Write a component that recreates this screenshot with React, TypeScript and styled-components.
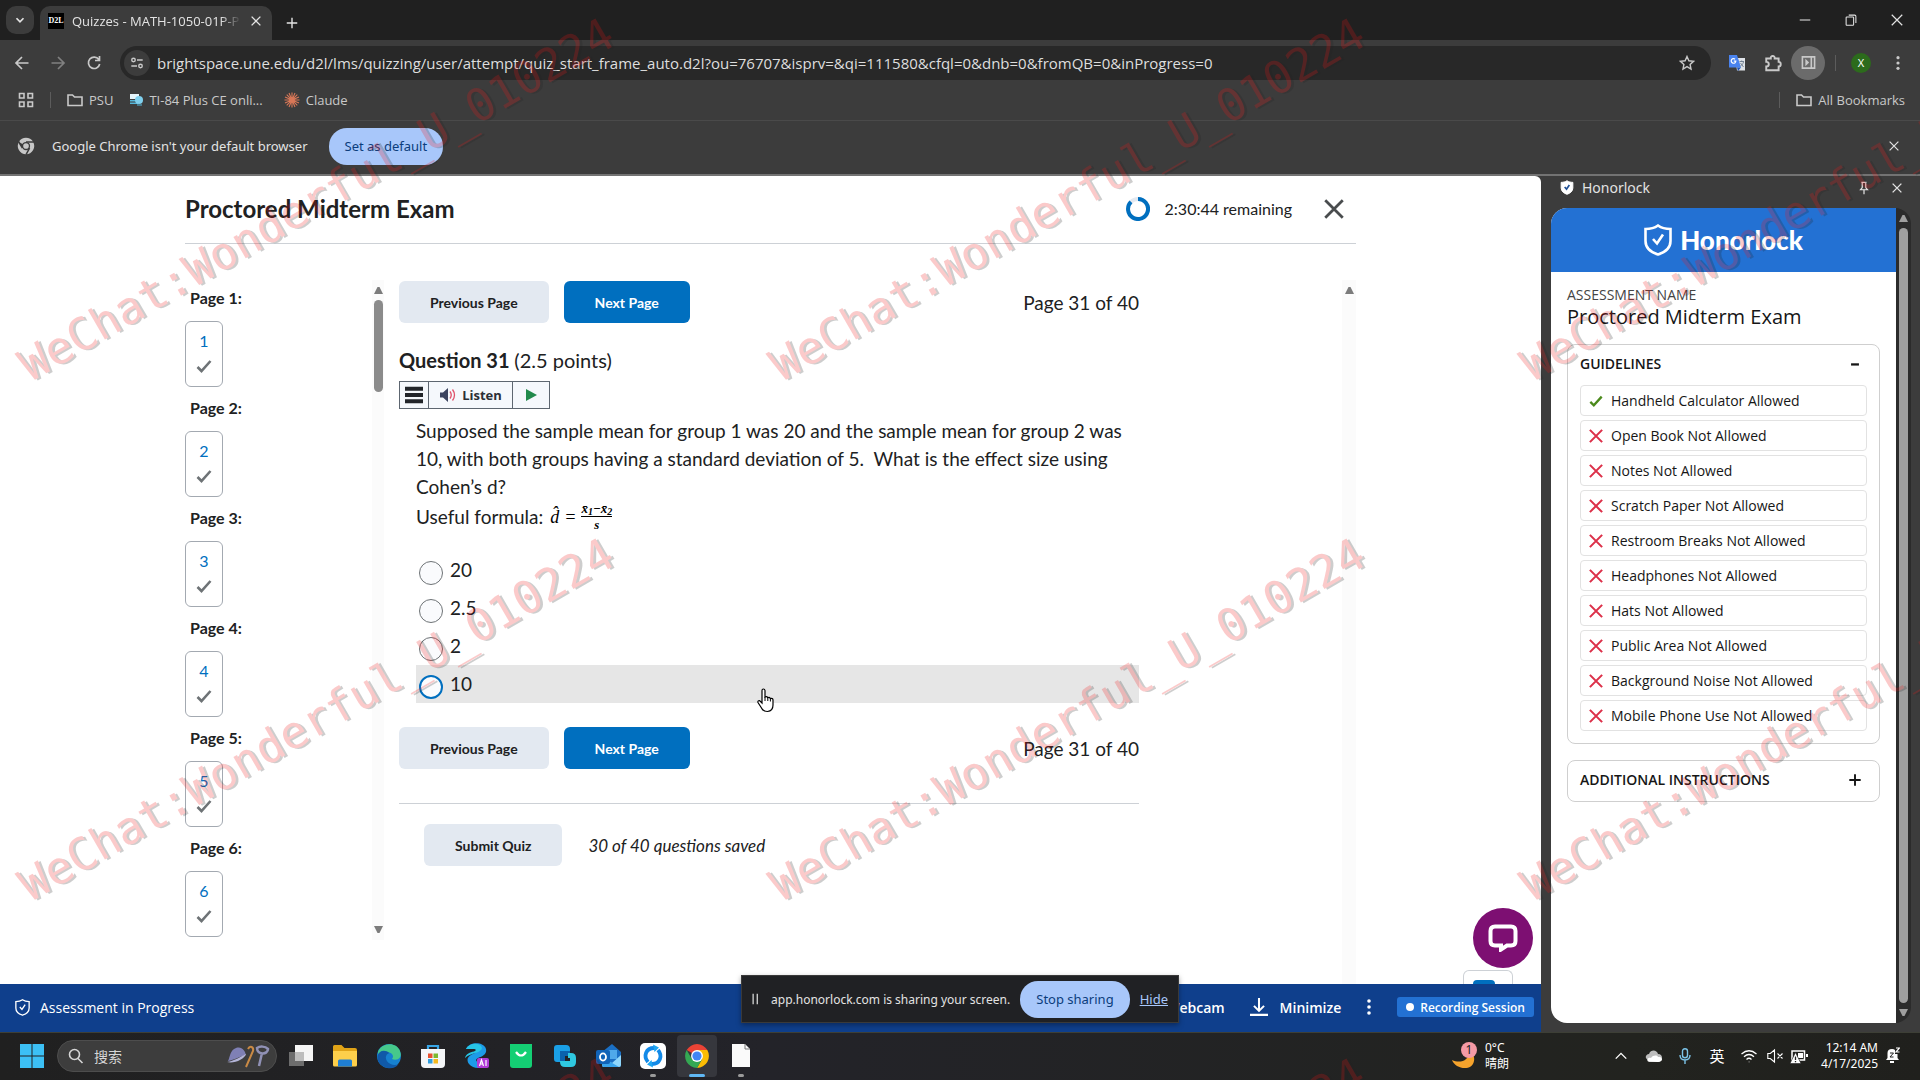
import React from "react";
import styled, { createGlobalStyle, css } from "styled-components";

const ui = `"Noto Sans", "Open Sans", "Noto Sans CJK SC", sans-serif`;
const lato = `Lato, "Open Sans", sans-serif`;
const open = `"Open Sans", "Noto Sans", sans-serif`;

const GlobalStyle = createGlobalStyle`
  * { box-sizing: border-box; }
  body { margin: 0; background: #3c3c3c; }
  button, input { font: inherit; color: inherit; margin: 0; }
  button { border: 0; padding: 0; background: none; cursor: pointer; }
  a { color: inherit; text-decoration: none; }
  svg { display: block; flex: none; }
  h1, h2, h3, p, ul { margin: 0; padding: 0; }
  ul { list-style: none; }
`;

const Screen = styled.div`
  position: relative;
  display: flex;
  flex-direction: column;
  height: 100vh;
  overflow: hidden;
  font-family: ${ui};
  font-size: 13px;
  color: #e3e3e3;
`;

/* ---------- browser frame ---------- */

const TabStrip = styled.header`
  display: flex;
  align-items: flex-end;
  height: 40px;
  padding-left: 6px;
  background: #202020;
  flex: none;
`;

const TabSearch = styled.button`
  display: grid;
  place-items: center;
  width: 28px;
  height: 28px;
  margin: 0 6px 6px 0;
  border-radius: 10px;
  background: #3c3c3c;
`;

const Tab = styled.div`
  display: flex;
  align-items: center;
  gap: 8px;
  width: 232px;
  height: 34px;
  padding: 0 9px 4px 8px;
  border-radius: 10px 10px 0 0;
  background: #3c3c3c;
`;

const Favicon = styled.span`
  display: grid;
  place-items: center;
  width: 16px;
  height: 16px;
  background: #000;
  color: #fff;
  font: bold 8px/16px "Liberation Serif", serif;
`;

const TabTitle = styled.span`
  flex: 1;
  overflow: hidden;
  white-space: nowrap;
  font-family: ${open};
  mask-image: linear-gradient(90deg, #000 88%, transparent);
`;

const IconButton = styled.button<{ $w?: number; $round?: boolean }>`
  display: grid;
  place-items: center;
  width: ${(p) => p.$w ?? 28}px;
  height: 34px;
  flex: none;
  ${(p) =>
    p.$round &&
    css`
      border-radius: 50%;
      background: #6b6b6b;
    `}
`;

const Spacer = styled.span`
  flex: 1;
`;

const WindowButtons = styled.div`
  display: flex;
  height: 40px;
  align-items: center;
`;

const Toolbar = styled.div`
  display: flex;
  align-items: center;
  height: 44px;
  padding: 1px 12px 0 4px;
  background: #3c3c3c;
  color: #c9c9c9;
  flex: none;
`;

const AddressBar = styled.label`
  display: flex;
  align-items: center;
  flex: 1;
  gap: 7px;
  height: 34px;
  margin: 0 8px;
  padding: 0 16px 0 4px;
  border-radius: 17px;
  background: #282828;
`;

const SiteInfo = styled.span`
  display: grid;
  place-items: center;
  width: 26px;
  height: 26px;
  border-radius: 50%;
  background: #3c3c3c;
`;

const AddressInput = styled.input`
  flex: 1;
  min-width: 0;
  border: 0;
  outline: 0;
  padding: 0;
  background: none;
  color: #dedede;
  font-family: ${open};
  font-size: 15px;
`;

const Avatar = styled.button`
  width: 20px;
  height: 20px;
  margin: 0 17px 0 15px;
  border-radius: 50%;
  background: #2c6b1c;
  color: #fff;
  font-size: 11px;
  line-height: 20px;
`;

const VLine = styled.span`
  width: 1px;
  height: 16px;
  background: #5c5c5c;
`;

const ToolLine = styled(VLine)`
  margin-left: 10px;
`;

const Bookmarks = styled.nav`
  display: flex;
  align-items: center;
  height: 37px;
  padding: 0 15px 4px 18px;
  border-bottom: 1px solid #4a4a4a;
  background: #3c3c3c;
  color: #c9c9c9;
  flex: none;
  font-family: ${open};
`;

const Bookmark = styled.a<{ $wide?: boolean }>`
  display: flex;
  align-items: center;
  gap: 6px;
  margin-left: ${(p) => (p.$wide ? 21 : 16)}px;
`;

const InfoBar = styled.div`
  display: flex;
  align-items: center;
  height: 55px;
  padding: 0 12px 3px 17px;
  border-bottom: 2px solid #737373;
  background: #3c3c3c;
  flex: none;
`;

const InfoText = styled.span`
  margin: 0 21px 0 17px;
`;

const PillButton = styled.button`
  height: 37px;
  padding: 0 16px;
  border-radius: 18px;
  background: #a8c7fa;
  color: #0b3d7c;
  font-size: 13px;
  white-space: nowrap;
`;

const Body = styled.div`
  display: flex;
  flex: 1;
  min-height: 0;
`;

/* ---------- quiz page ---------- */

const PageArea = styled.div`
  position: relative;
  display: flex;
  flex-direction: column;
  flex: 1;
  min-width: 0;
  background: #fff;
  border-top-right-radius: 6px;
  overflow: hidden;
`;

const Quiz = styled.main`
  display: flex;
  flex-direction: column;
  flex: 1;
  min-height: 0;
  width: 100%;
  max-width: 1171px;
  margin: 0 auto;
  font-family: ${lato};
  font-size: 19px;
  color: #202122;
`;

const QuizHeader = styled.header`
  display: flex;
  align-items: center;
  height: 68px;
  flex: none;
  padding: 0 12px 2px 0;
  border-bottom: 1px solid #cdd1d6;
`;

const QuizTitle = styled.h1`
  flex: 1;
  font-size: 24px;
  font-weight: 700;
`;

const Timer = styled.span`
  display: flex;
  align-items: center;
  gap: 15px;
  margin-right: 32px;
  font-size: 16px;
`;

const QuizBody = styled.div`
  display: flex;
  flex: 1;
  min-height: 0;
  padding-top: 36px;
`;

const PageNav = styled.nav`
  width: 187px;
  height: 660px;
  overflow: hidden;
  flex: none;
`;

const NavGroup = styled.div`
  height: 110px;
`;

const NavLabel = styled.h3`
  padding: 8px 0 0 5px;
  height: 41px;
  font-size: 16px;
  line-height: 20px;
`;

const NavBox = styled.a`
  display: flex;
  flex-direction: column;
  align-items: center;
  gap: 6px;
  width: 38px;
  height: 66px;
  padding-top: 8px;
  border: 1px solid #a3a9b1;
  border-radius: 6px;
  color: #006fbf;
  font-size: 16px;
  line-height: 22px;
`;

const ScrollTrack = styled.div<{ $dark?: boolean }>`
  display: flex;
  flex-direction: column;
  align-items: center;
  width: ${(p) => (p.$dark ? 15 : 14)}px;
  padding: 6px 0;
  gap: 5px;
  background: ${(p) => (p.$dark ? "#2b2b2b" : "#fbfbfb")};
  flex: none;
`;

const NavTrack = styled(ScrollTrack)`
  width: 12px;
  height: 660px;
`;

const Thumb = styled.div<{ $h?: number }>`
  width: 9px;
  border-radius: 5px;
  background: ${(p) => (p.$h ? "#8b8b8b" : "#9f9f9f")};
  ${(p) => (p.$h ? `height: ${p.$h}px;` : "flex: 1;")}
`;

const Question = styled.section`
  flex: 1;
  min-width: 0;
  padding: 1px 0 0 15px;
`;

const Column = styled.div`
  max-width: 740px;
`;

const Pager = styled.div`
  display: flex;
  align-items: center;
  gap: 15px;
  height: 42px;
`;

const ActionButton = styled.button<{ $primary?: boolean }>`
  height: 42px;
  padding: 0 31px;
  border-radius: 6px;
  background: ${(p) => (p.$primary ? "#006fbf" : "#e3e9f1")};
  color: ${(p) => (p.$primary ? "#fff" : "#202122")};
  font-size: 14px;
  font-weight: 700;
`;

const PageCount = styled.span`
  margin-left: auto;
`;

const QuestionTitle = styled.h2`
  margin: 23px 0 7px;
  font-size: 20px;
  line-height: 28px;
  span {
    font-weight: 400;
  }
`;

const ListenBar = styled.div`
  display: flex;
  width: fit-content;
  height: 28px;
  border: 1px solid #5d6670;
  background: #f5f8fc;
`;

const ListenPart = styled.button<{ $w: number }>`
  display: flex;
  align-items: center;
  justify-content: center;
  gap: 5px;
  width: ${(p) => p.$w}px;
  font-family: ${open};
  font-size: 13px;
  font-weight: 700;
  color: #2b2f36;
  & + & {
    border-left: 1px solid #5d6670;
  }
`;

const Prompt = styled.div`
  margin: 8px 0 19px;
  padding-left: 17px;
  line-height: 28px;
`;

const FormulaLine = styled.p`
  display: flex;
  align-items: center;
  gap: 7px;
`;

const Formula = styled.span`
  display: flex;
  align-items: center;
  gap: 5px;
  font: italic 18px/18px "Liberation Serif", serif;
  color: #000;
`;

const Fraction = styled.span`
  display: flex;
  flex-direction: column;
  align-items: center;
  font: italic bold 13px/15px "Liberation Serif", serif;
  sub {
    font-size: 10px;
    line-height: 0;
    vertical-align: -2px;
  }
  span:first-child {
    border-bottom: 1px solid #000;
  }
`;

const Options = styled.div`
  padding-left: 17px;
  margin-bottom: 24px;
`;

const Option = styled.label<{ $hover?: boolean }>`
  display: flex;
  gap: 7px;
  height: 38px;
  padding: 6px 0 0 3px;
  line-height: 26px;
  background: ${(p) => (p.$hover ? "#e6e6e6" : "transparent")};
`;

const Radio = styled.input<{ $hover?: boolean }>`
  appearance: none;
  width: 24px;
  height: 24px;
  margin-top: 4px;
  border: ${(p) => (p.$hover ? "2px solid #006fbf" : "1px solid #6e7376")};
  border-radius: 50%;
  background: #fafbfd;
`;

const SubmitRow = styled.div`
  display: flex;
  align-items: center;
  gap: 26px;
  margin-top: 34px;
  padding: 20px 0 0 25px;
  border-top: 1px solid #cdd1d6;
  font-size: 17px;
  font-style: italic;
  button {
    font-style: normal;
  }
`;

const ChatButton = styled.button`
  position: absolute;
  right: 8px;
  bottom: 64px;
  display: grid;
  place-items: center;
  width: 60px;
  height: 60px;
  border-radius: 50%;
  background: #7d0f72;
`;

const ChatTab = styled.div`
  position: absolute;
  right: 28px;
  bottom: 48px;
  width: 50px;
  height: 14px;
  padding: 9px 17px 0 9px;
  border: 1px solid #cdd1d6;
  border-bottom: 0;
  border-radius: 6px 6px 0 0;
  background: #fff;
  &::before {
    content: "";
    display: block;
    height: 4px;
    border-radius: 4px 4px 0 0;
    background: #006fbf;
  }
`;

const ProctorBar = styled.footer`
  display: flex;
  align-items: center;
  height: 48px;
  flex: none;
  padding: 0 7px 2px 15px;
  background: #0f3f8c;
  color: #fff;
  font-family: ${open};
  font-size: 14px;
`;

const ProctorStatus = styled.span`
  display: flex;
  align-items: center;
  gap: 10px;
`;

const BarButton = styled.button`
  display: flex;
  align-items: center;
  gap: 12px;
  margin-right: 25px;
  font-weight: 600;
`;

const Recording = styled.span`
  display: flex;
  align-items: center;
  gap: 6px;
  height: 20px;
  padding: 0 9px;
  border-radius: 3px;
  background: #2371d3;
  font-size: 12px;
  font-weight: 600;
  &::before {
    content: "";
    width: 8px;
    height: 8px;
    border-radius: 50%;
    background: #fff;
  }
`;

const ShareBar = styled.div`
  position: absolute;
  left: 741px;
  bottom: 9px;
  display: flex;
  align-items: center;
  justify-content: space-between;
  width: 438px;
  height: 48px;
  padding: 0 10px 0 7px;
  border: 1px solid #3a3a3a;
  background: #202124;
  box-shadow: 0 2px 5px rgba(0, 0, 0, 0.35);
  color: #e3e3e3;
  white-space: nowrap;
  a {
    color: #a8c7fa;
    text-decoration: underline;
  }
`;

const ShareText = styled.span`
  font-size: 12px;
`;

/* ---------- side panel ---------- */

const SidePanel = styled.aside`
  display: flex;
  flex-direction: column;
  width: 379px;
  padding: 0 9px 9px 10px;
  background: #3c3c3c;
  flex: none;
`;

const SideHeader = styled.div`
  display: flex;
  align-items: center;
  gap: 8px;
  height: 32px;
  flex: none;
  margin-right: -4px;
  padding: 0 0 9px 9px;
  font-size: 14px;
`;

const SideFrame = styled.div`
  display: flex;
  flex: 1;
  min-height: 0;
  overflow: hidden;
  border-radius: 16px;
`;

const SideContent = styled.div`
  flex: 1;
  background: #fff;
  color: #161616;
  font-family: ${open};
`;

const Brand = styled.div`
  display: flex;
  align-items: center;
  justify-content: center;
  gap: 8px;
  height: 64px;
  background: #2371d3;
  color: #fff;
  font: 900 26px/32px ${lato};
`;

const SideInner = styled.div`
  display: flex;
  flex-direction: column;
  padding: 13px 16px;
`;

const Eyebrow = styled.span`
  font-size: 14px;
  line-height: 20px;
  color: #444;
`;

const ExamName = styled.h2`
  margin-bottom: 15px;
  font-size: 20px;
  line-height: 24px;
  font-weight: 400;
`;

const Card = styled.section`
  margin-bottom: 16px;
  padding: 0 12px;
  border: 1px solid #cfcfcf;
  border-radius: 8px;
`;

const CardHeader = styled.button`
  display: flex;
  align-items: center;
  justify-content: space-between;
  width: 100%;
  height: 40px;
  padding: 0 5px 3px 0;
  font-size: 14px;
  font-weight: 600;
`;

const RuleList = styled.ul`
  display: flex;
  flex-direction: column;
  gap: 4px;
  padding-bottom: 12px;
`;

const Rule = styled.li`
  display: flex;
  align-items: center;
  gap: 8px;
  height: 31px;
  padding-left: 8px;
  border: 1px solid #e2e2e2;
  border-radius: 4px;
  font-size: 14px;
`;

/* ---------- taskbar ---------- */

const Taskbar = styled.footer`
  display: flex;
  align-items: center;
  height: 48px;
  flex: none;
  padding: 0 20px 2px 10px;
  border-top: 1px solid #3d3f36;
  background: linear-gradient(90deg, #202020 0%, #232329 40%, #22231f 85%, #20201d 100%);
  color: #fff;
`;

const AppButton = styled.button<{ $active?: boolean; $open?: boolean }>`
  position: relative;
  display: grid;
  place-items: center;
  width: 40px;
  height: 42px;
  margin: 0 2px;
  border-radius: 4px;
  flex: none;
  ${(p) => p.$active && "background: #36373d;"}
  ${(p) =>
    (p.$active || p.$open) &&
    css`
      &::after {
        content: "";
        position: absolute;
        left: calc(50% - ${p.$active ? 8 : 3}px);
        bottom: 0;
        width: ${p.$active ? 16 : 6}px;
        height: 3px;
        border-radius: 2px;
        background: ${p.$active ? "#60b8f5" : "#9a9a9a"};
      }
    `}
`;

const SearchBox = styled.label`
  display: flex;
  align-items: center;
  gap: 10px;
  width: 220px;
  height: 32px;
  margin: 0 2px 0 3px;
  padding: 0 5px 0 10px;
  border: 1px solid #4d4d4d;
  border-radius: 16px;
  background: #3d3d3d;
  font-size: 14px;
`;

const SearchInput = styled.input`
  flex: 1;
  min-width: 0;
  border: 0;
  outline: 0;
  padding: 0;
  background: none;
  font-family: "Noto Sans CJK SC", sans-serif;
  &::placeholder {
    color: #d6d6d6;
    opacity: 1;
  }
`;

const Weather = styled.button`
  display: flex;
  align-items: center;
  gap: 8px;
  margin-right: 96px;
  text-align: left;
  font-size: 12px;
  line-height: 16px;
  span {
    display: block;
  }
`;

const Tray = styled.div`
  display: flex;
  align-items: center;
`;

const TrayButton = styled.button<{ $w: number }>`
  display: grid;
  place-items: center;
  width: ${(p) => p.$w}px;
  height: 32px;
  font-size: 15px;
`;

const Clock = styled.button`
  width: 65px;
  margin-right: 7px;
  text-align: right;
  font-size: 12px;
  line-height: 16px;
  white-space: nowrap;
`;

/* ---------- watermark and cursor ---------- */

const Watermark = styled.div`
  position: absolute;
  inset: -60px 0 0 -59px;
  display: grid;
  grid-template-columns: repeat(3, 751px);
  grid-auto-rows: 520px;
  overflow: hidden;
  opacity: 0.22;
  pointer-events: none;
  z-index: 5;
  color: #f01414;
  font: 45px/50px "DejaVu Sans Mono", monospace;
  text-shadow: 2px 2px 0 #222;
`;

const Mark = styled.span`
  place-self: center;
  white-space: nowrap;
  transform: rotate(-30deg);
`;

const Cursor = styled.svg`
  position: absolute;
  left: 757px;
  top: 688px;
  z-index: 4;
`;

/* ---------- icons ---------- */

type LineProps = { size?: number; w?: number; color?: string; d: string; fill?: string };
const Line = ({ size = 16, w = 1.6, color = "currentColor", d, fill = "none" }: LineProps) => (
  <svg width={size} height={size} viewBox="0 0 16 16" fill={fill} stroke={color} strokeWidth={w}>
    <path d={d} />
  </svg>
);

const X = "M3 3l10 10M13 3L3 13";
const FOLDER = "M1 3h4.5l2 2h7.500v8.500H1z";

const Arrow = ({ down, color = "#7c7c7c" }: { down?: boolean; color?: string }) => (
  <svg width="9" height="9" viewBox="0 0 9 9">
    <path d={down ? "M0 1h9L5.5 8h-2z" : "M0 8h9L5.5 1h-2z"} fill={color} />
  </svg>
);

const Dots = ({ h = 18 }: { h?: number }) => (
  <svg width="6" height={h} viewBox="0 0 6 18" fill="currentColor">
    <circle cx="3" cy="3" r="1.8" />
    <circle cx="3" cy="9" r="1.8" />
    <circle cx="3" cy="15" r="1.8" />
  </svg>
);

const Shield = ({ w, h, sw = 2, solid }: { w: number; h: number; sw?: number; solid?: boolean }) => (
  <svg width={w} height={h} viewBox="0 0 28 32" fill={solid ? "#fff" : "none"} stroke={solid ? "#fff" : "currentColor"} strokeWidth={sw}>
    <path d="M14 1.500C10.500 4 6 5 1.500 5v12c0 7 6 11.500 12.500 13.500C20.500 28.500 26.500 24 26.500 17V5C22 5 17.500 4 14 1.500z" />
    <path d="M9 15l4 4.500 6-9" fill="none" stroke={solid ? "#1f4f95" : "currentColor"} strokeWidth={solid ? 3.5 : sw} />
  </svg>
);

const ChromeIcon = ({ size = 26, mono }: { size?: number; mono?: boolean }) => {
  const c = mono ? ["#c7c7c7", "#c7c7c7", "#c7c7c7", "#3c3c3c"] : ["#ea4335", "#fbbc04", "#34a853", "#fff"];
  return (
    <svg width={size} height={size} viewBox="0 0 48 48">
      <path d="M24 24L4.950 13A22 22 0 0 1 43.050 13z" fill={c[0]} />
      <path d="M24 13H43.050A22 22 0 0 1 24 46L33.500 29.500z" fill={c[1]} />
      <path d="M14.500 29.500L4.950 13A22 22 0 0 0 24 46L33.500 29.500z" fill={c[2]} />
      {mono && <path d="M24 13h21M14.500 29.500L4 12M33.500 29.500L24 47" stroke="#3c3c3c" strokeWidth="4" />}
      <circle cx="24" cy="24" r="11" fill={c[3]} />
      <circle cx="24" cy="24" r={mono ? 7.5 : 8.5} fill={mono ? "#c7c7c7" : "#4285f4"} />
    </svg>
  );
};

const Translate = () => (
  <svg width="18" height="18" viewBox="0 0 18 18">
    <path d="M7 4h10v12.500H9z" fill="#dfe3e8" />
    <path d="M1 1h8l4 12.500H1z" fill="#4a83ee" />
    <path d="M9 13.500h4l-3 3.500z" fill="#1f53b8" />
    <path d="M7 5.200a2.300 2.300 0 1 0 .8 2H5.800" fill="none" stroke="#fff" strokeWidth="1.200" />
    <path d="M11.500 7.500h4.500M13.700 6.500v1M15.500 8c-.5 2-2 3.500-3 4M12.500 9l3 4" fill="none" stroke="#6b7b8c" strokeWidth=".9" />
  </svg>
);

const Burst = () => (
  <svg width="16" height="16" viewBox="0 0 16 16" stroke="#d97757" strokeWidth="1.100">
    <path d="M8 .5v15M.5 8h15M2.700 2.700l10.600 10.600M13.300 2.700L2.700 13.300M5 1l6 14M11 1L5 15M1 5l14 6M1 11l14-6" />
  </svg>
);

const CheckMark = ({ color, size, w = 2.2 }: { color: string; size: number; w?: number }) => (
  <svg width={size} height={size} viewBox="0 0 16 16" fill="none" stroke={color} strokeWidth={w}>
    <path d="M1.500 9l4 4L14.500 3" />
  </svg>
);

const Speaker = () => (
  <svg width="18" height="16" viewBox="0 0 18 16">
    <path d="M1 5.500h3L9 1v14L4 10.500H1z" fill="#3c4460" />
    <path d="M11 4.500q2.500 3.500 0 7M13.500 2.500q4 5.500 0 11" fill="none" stroke="#e0526a" strokeWidth="1.300" />
  </svg>
);

const taskIcons: { name: string; art: React.ReactNode; open?: boolean; active?: boolean }[] = [
  {
    name: "Task view",
    art: (
      <>
        <path d="M1 9h15v14H1z" fill="#6d6d6d" />
        <path d="M7 2h18v16H7z" fill="#f5f5f5" />
        <path d="M7 9h9v9H7z" fill="#bdbdbd" />
      </>
    ),
  },
  {
    name: "Files",
    art: (
      <>
        <path d="M1 3.500Q1 2 2.500 2h7l3 3H23q2 0 2 2v15H1z" fill="#e0a317" />
        <path d="M1 8h24v14q0 1.500-1.500 1.500h-21Q1 23.500 1 22z" fill="#fdcf4b" />
        <path d="M6 23.500V18q0-1.500 1.500-1.500h11Q20 16.500 20 18v5.500z" fill="#1f7fd3" />
      </>
    ),
  },
  {
    name: "Edge",
    art: (
      <>
        <circle cx="13" cy="13" r="12" fill="#1681d0" />
        <path d="M2 9C5 0 20-2 24 8c3 8-4 10-8 8 2-2 1-6-3-6.500C8 9 3 12 2 17z" fill="#46c98b" />
        <path d="M1.500 13c1-5 7-7 12-3-5 1-5 8 1 11 3 1.500 6 1 8 0-3 5-10 5-14 3-5-2-7.500-7-7-11z" fill="#1059a8" />
      </>
    ),
  },
  {
    name: "Store",
    art: (
      <>
        <path d="M8 7V3h10v4" fill="none" stroke="#38a6e8" strokeWidth="2.200" />
        <path d="M1 6h24v15q0 4-4 4H5q-4 0-4-4z" fill="#f4f6f8" />
        <path d="M8 10.500h4.500V15H8z" fill="#e8502f" />
        <path d="M13.500 10.500H18V15h-4.500z" fill="#7cb82f" />
        <path d="M8 16h4.500v4.500H8z" fill="#2f9fe0" />
        <path d="M13.500 16H18v4.500h-4.500z" fill="#f5b91f" />
      </>
    ),
  },
  {
    name: "AI assistant",
    art: (
      <>
        <path d="M2 6C6-2 20-1 22 6c1 5-3 7-8 9-3 1.500-2 4 1 4h9c-3 7-14 8-19 2-4-6 1-9 6-11 3-1.500 2-4-1-4z" fill="#1d9be8" />
        <path d="M1 15c1-4 5-6 9-6.500C13 7 12 6 10 6H2C5 1 11 0 15 1.500c5 3 3 6-2 8C8 11 4 12 1 15z" fill="#27c5e6" />
        <rect x="13" y="15" width="12" height="10" rx="2" fill="#b13bd8" />
        <path d="M15.500 23l2-6 2 6M16 21h3M22 17v6" fill="none" stroke="#fff" strokeWidth="1.200" />
      </>
    ),
  },
  {
    name: "Market",
    art: (
      <>
        <path d="M2 1h22v21q0 3-3 3H5q-3 0-3-3z" fill="#14cf74" />
        <path d="M8 9q5 7 10 0" fill="none" stroke="#fff" strokeWidth="2.200" />
      </>
    ),
  },
  {
    name: "Dev home",
    art: (
      <>
        <path d="M2 5q0-3 3-3h9q4 0 4 4v3H9v10H5q-3 0-3-3z" fill="#1a9fe6" />
        <path d="M8 8h10v5h-5v6H8z" fill="#0b62ad" />
        <path d="M10 15h6v-5h3q5 0 5 5v4q0 5-5 5h-6q-5 0-5-5v-1h10v-3h-8z" fill="#2fc8e0" />
      </>
    ),
  },
  {
    name: "Outlook",
    art: (
      <>
        <path d="M6 9L16 1l9 8v13q0 2-2 2H8q-2 0-2-2z" fill="#1a6fc4" />
        <path d="M10 7h11v9H10z" fill="#4fa9ea" />
        <path d="M6 14l10 6 9-8v10q0 2-2 2H8q-2 0-2-2z" fill="#8fd6fb" />
        <path d="M6 14l17 10H8q-2 0-2-2z" fill="#38a4ec" />
        <rect x="0" y="7" width="14" height="14" rx="2" fill="#1164b8" />
        <ellipse cx="7" cy="14" rx="3" ry="3.600" fill="none" stroke="#fff" strokeWidth="1.800" />
      </>
    ),
  },
  {
    name: "Remote",
    open: true,
    art: (
      <>
        <rect x="0" y="0" width="26" height="26" rx="5" fill="#fff" />
        <path d="M8 19C3 13 6 5 14 5M18 7c5 6 2 14-6 14" fill="none" stroke="#138ae8" strokeWidth="3.800" />
        <path d="M13 1.500l6 3-4.500 4.500zM13 24.500l-6-3 4.500-4.500z" fill="#1fa6f2" />
      </>
    ),
  },
  { name: "Chrome", open: true, active: true, art: null },
  {
    name: "Document",
    open: true,
    art: (
      <>
        <path d="M4 1h13l5 5v18H4z" fill="#fafafa" />
        <path d="M17 1v5h5" fill="none" stroke="#777" />
      </>
    ),
  },
];

const rules = [
  "Handheld Calculator Allowed",
  "Open Book Not Allowed",
  "Notes Not Allowed",
  "Scratch Paper Not Allowed",
  "Restroom Breaks Not Allowed",
  "Headphones Not Allowed",
  "Hats Not Allowed",
  "Public Area Not Allowed",
  "Background Noise Not Allowed",
  "Mobile Phone Use Not Allowed",
];

const PagerRow = () => (
  <Pager>
    <ActionButton>Previous Page</ActionButton>
    <ActionButton $primary>Next Page</ActionButton>
    <PageCount>Page 31 of 40</PageCount>
  </Pager>
);

export default function App() {
  return (
    <Screen>
      <GlobalStyle />
      <TabStrip>
        <TabSearch aria-label="Search tabs">
          <Line size={14} w={2} d="M4 6l4 4 4-4" />
        </TabSearch>
        <Tab>
          <Favicon>D2L</Favicon>
          <TabTitle>Quizzes - MATH-1050-01P-P</TabTitle>
          <button aria-label="Close tab">
            <Line size={14} d={X} />
          </button>
        </Tab>
        <IconButton $w={40} aria-label="New tab">
          <Line size={14} d="M8 2v12M2 8h12" />
        </IconButton>
        <Spacer />
        <WindowButtons>
          <IconButton $w={46} aria-label="Minimize window">
            <Line size={12} w={1.4} d="M1 8h14" />
          </IconButton>
          <IconButton $w={46} aria-label="Restore window">
            <Line size={12} w={1.4} d="M1.500 5q0-1 1-1h8q1 0 1 1v9q0 1-1 1h-8q-1 0-1-1zM5 1.500h8q1.500 0 1.500 1.500v9" />
          </IconButton>
          <IconButton $w={46} aria-label="Close window">
            <Line size={14} w={1.4} d="M2 2l12 12M14 2L2 14" />
          </IconButton>
        </WindowButtons>
      </TabStrip>

      <Toolbar>
        <IconButton $w={36} aria-label="Back">
          <Line w={1.7} d="M14.500 8H2.500M8 2L2 8l6 6" />
        </IconButton>
        <IconButton $w={36} aria-label="Forward">
          <Line w={1.7} color="#808080" d="M1.500 8h12M8 2l6 6-6 6" />
        </IconButton>
        <IconButton $w={36} aria-label="Reload">
          <Line w={1.7} d="M12.800 4.500A5.700 5.700 0 1 0 13.700 9M13.500 1v4.500H9" />
        </IconButton>
        <AddressBar>
          <SiteInfo>
            <Line size={14} d="M8 4.500h6.500M1.500 11.500H8M6 4.500a2 2 0 1 1-4 0 2 2 0 1 1 4 0M14 11.500a2 2 0 1 1-4 0 2 2 0 1 1 4 0" />
          </SiteInfo>
          <AddressInput
            aria-label="Address"
            readOnly
            value="brightspace.une.edu/d2l/lms/quizzing/user/attempt/quiz_start_frame_auto.d2l?ou=76707&isprv=&qi=111580&cfql=0&dnb=0&fromQB=0&inProgress=0"
          />
          <Line w={1.4} d="M8 1.500l1.900 4.300 4.600.5-3.400 3.100.9 4.600L8 11.600 4 14l.9-4.600L1.500 6.300l4.600-.5z" />
        </AddressBar>
        <IconButton $w={36} aria-label="Translate">
          <Translate />
        </IconButton>
        <IconButton $w={36} aria-label="Extensions">
          <Line size={18} w={1.7} d="M2 4h4c-.5-3 4-3 3.500 0H13v3c2.500 0 2.500 4 0 4v3.500H2v-3.500c3 0 3-4 0-4z" />
        </IconButton>
        <IconButton $w={34} $round aria-label="Side panel">
          <Line size={15} w={1.7} d="M1.500 2h13v12h-13zM11 2v12M5.500 6v4l2-2z" />
        </IconButton>
        <ToolLine />
        <Avatar aria-label="Profile">X</Avatar>
        <IconButton $w={20} aria-label="Menu">
          <Dots h={16} />
        </IconButton>
      </Toolbar>

      <Bookmarks>
        <Line d="M1.500 1.500h4.500v4.500h-4.500zM10 1.500h4.500v4.500H10zM1.500 10h4.500v4.500h-4.500zM10 10h4.500v4.500H10z" />
        <Bookmark as="span">
          <VLine />
        </Bookmark>
        <Bookmark href="#psu">
          <Line d={FOLDER} />
          PSU
        </Bookmark>
        <Bookmark href="#ti84">
          <svg width="14" height="14" viewBox="0 0 14 14">
            <path d="M1 1h9v5H1z" fill="#e5f5fb" />
            <path d="M1 7h9v1.500H1zM1 9.500h8V11H1z" fill="#55b8dc" />
            <circle cx="10" cy="7" r="4" fill="#7fd0ee" />
            <path d="M8 12h5" stroke="#55b8dc" />
          </svg>
          TI-84 Plus CE onli...
        </Bookmark>
        <Bookmark href="#claude" $wide>
          <Burst />
          Claude
        </Bookmark>
        <Spacer />
        <VLine />
        <Bookmark href="#all">
          <Line d={FOLDER} />
          All Bookmarks
        </Bookmark>
      </Bookmarks>

      <InfoBar>
        <ChromeIcon size={18} mono />
        <InfoText>Google Chrome isn't your default browser</InfoText>
        <PillButton>Set as default</PillButton>
        <Spacer />
        <IconButton aria-label="Dismiss">
          <Line size={14} w={1.4} d={X} />
        </IconButton>
      </InfoBar>

      <Body>
        <PageArea>
          <Quiz>
            <QuizHeader>
              <QuizTitle>Proctored Midterm Exam</QuizTitle>
              <Timer>
                <svg width="24" height="24" viewBox="0 0 24 24" fill="none" strokeWidth="4">
                  <circle cx="12" cy="12" r="10" stroke="#e3e9f1" />
                  <path d="M12 2A10 10 0 1 1 5 4.900" stroke="#006fbf" />
                </svg>
                2:30:44 remaining
              </Timer>
              <button aria-label="Close quiz">
                <Line size={20} w={2.2} color="#494c4e" d="M1 1l14 14M15 1L1 15" />
              </button>
            </QuizHeader>
            <QuizBody>
              <PageNav>
                {[1, 2, 3, 4, 5, 6].map((n) => (
                  <NavGroup key={n}>
                    <NavLabel>Page {n}:</NavLabel>
                    <NavBox href={"#page-" + n}>
                      {n}
                      <CheckMark size={16} w={2.6} color="#6e7376" />
                    </NavBox>
                  </NavGroup>
                ))}
              </PageNav>
              <NavTrack>
                <Arrow />
                <Thumb $h={92} />
                <Spacer />
                <Arrow down />
              </NavTrack>
              <Question>
                <Column>
                  <PagerRow />
                  <QuestionTitle>
                    Question 31 <span>(2.5 points)</span>
                  </QuestionTitle>
                  <ListenBar>
                    <ListenPart $w={28} aria-label="Reader menu">
                      <Line size={18} w={3.6} color="#22252a" d="M0 2.500h16M0 8h16M0 13.500h16" />
                    </ListenPart>
                    <ListenPart $w={84}>
                      <Speaker />
                      Listen
                    </ListenPart>
                    <ListenPart $w={37} aria-label="Play">
                      <svg width="11" height="12" viewBox="0 0 11 12">
                        <path d="M0 0l11 6-11 6z" fill="#218a4c" />
                      </svg>
                    </ListenPart>
                  </ListenBar>
                  <Prompt>
                    <p>
                      Supposed the sample mean for group 1 was 20 and the sample mean for group 2 was 10, with both groups
                      having a standard deviation of 5.&nbsp; What is the effect size using Cohen’s d?
                    </p>
                    <FormulaLine>
                      Useful formula:
                      <Formula>
                        <span>d̂</span>
                        <span>=</span>
                        <Fraction>
                          <span>
                            x̄<sub>1</sub>−x̄<sub>2</sub>
                          </span>
                          <span>s</span>
                        </Fraction>
                      </Formula>
                    </FormulaLine>
                  </Prompt>
                  <Options>
                    {["20", "2.5", "2", "10"].map((v) => (
                      <Option key={v} $hover={v === "10"}>
                        <Radio type="radio" name="answer" $hover={v === "10"} />
                        {v}
                      </Option>
                    ))}
                  </Options>
                  <PagerRow />
                  <SubmitRow>
                    <ActionButton>Submit Quiz</ActionButton>
                    30 of 40 questions saved
                  </SubmitRow>
                </Column>
              </Question>
              <ScrollTrack>
                <Arrow />
              </ScrollTrack>
            </QuizBody>
          </Quiz>
          <ChatButton aria-label="Chat">
            <svg width="30" height="28" viewBox="0 0 30 28">
              <path d="M7 2.500h16q4.500 0 4.500 4.500v10q0 4.500-4.500 4.500h-4l-6 4v-4H7q-4.500 0-4.500-4.500V7q0-4.500 4.500-4.500z" fill="none" stroke="#fff" strokeWidth="4" />
            </svg>
          </ChatButton>
          <ChatTab />
          <ProctorBar>
            <ProctorStatus>
              <Shield w={15} h={17} sw={2.5} />
              Assessment in Progress
            </ProctorStatus>
            <Spacer />
            <BarButton>Webcam</BarButton>
            <BarButton>
              <Line size={18} w={1.8} d="M8 0v11M3.500 7L8 11.500 12.500 7M0 15h16" />
              Minimize
            </BarButton>
            <BarButton aria-label="More">
              <Dots />
            </BarButton>
            <Recording>Recording Session</Recording>
          </ProctorBar>
          <ShareBar>
            <Line size={12} d="M5.500 1v14M11 1v14" />
            <ShareText>app.honorlock.com is sharing your screen.</ShareText>
            <PillButton>Stop sharing</PillButton>
            <a href="#hide">Hide</a>
          </ShareBar>
        </PageArea>

        <SidePanel>
          <SideHeader>
            <Shield w={14} h={15} solid />
            Honorlock
            <Spacer />
            <Line size={14} w={1.4} d="M5 1.500h6M6 1.500v6L4 10h8l-2-2.500v-6M8 10v5" />
            <IconButton $w={36} aria-label="Close side panel">
              <Line size={14} w={1.6} d={X} />
            </IconButton>
          </SideHeader>
          <SideFrame>
            <SideContent>
              <Brand>
                <Shield w={28} h={32} sw={2.6} />
                Honorlock
              </Brand>
              <SideInner>
                <Eyebrow>ASSESSMENT NAME</Eyebrow>
                <ExamName>Proctored Midterm Exam</ExamName>
                <Card>
                  <CardHeader>
                    GUIDELINES
                    <Line size={14} w={2.6} d="M3.500 8.500h9" />
                  </CardHeader>
                  <RuleList>
                    {rules.map((r, i) => (
                      <Rule key={r}>
                        {i === 0 ? <CheckMark size={14} w={2.6} color="#4b8a1c" /> : <Line size={14} w={2.4} color="#dc3049" d="M1 1l14 14M15 1L1 15" />}
                        {r}
                      </Rule>
                    ))}
                  </RuleList>
                </Card>
                <Card>
                  <CardHeader>
                    ADDITIONAL INSTRUCTIONS
                    <Line size={14} w={2.2} d="M8 1.500v13M1.500 8h13" />
                  </CardHeader>
                </Card>
              </SideInner>
            </SideContent>
            <ScrollTrack $dark>
              <Arrow color="#9f9f9f" />
              <Thumb />
              <Arrow down color="#9f9f9f" />
            </ScrollTrack>
          </SideFrame>
        </SidePanel>
      </Body>

      <Taskbar>
        <AppButton aria-label="Start">
          <svg width="24" height="24" viewBox="0 0 24 24">
            <path d="M0 0h11.500v11.500H0zM12.500 0H24v11.500H12.500zM0 12.500h11.500V24H0zM12.500 12.500H24V24H12.500z" fill="#3cc0f5" />
          </svg>
        </AppButton>
        <SearchBox>
          <Line w={1.6} color="#d6d6d6" d="M11.500 6.500a5 5 0 1 1-10 0 5 5 0 1 1 10 0M10 10.500l4.500 4.500" />
          <SearchInput aria-label="搜索" placeholder="搜索" />
          <svg width="44" height="24" viewBox="0 0 44 24">
            <path d="M1 17C3 13 3 6 9 4s9 3 10 7c-5 1-12 5-18 6z" fill="#7f80b5" />
            <path d="M0 18c8-1 14-6 19-8-1 5-12 10-19 8z" fill="#b4b5d8" />
            <path d="M19 23l7-16c1-4-3-6-5-2" fill="none" stroke="#c98a45" strokeWidth="2" />
            <path d="M30 4c0 7 11 7 11 1-3-3-8-3-11-1zM35 9l-3 13" fill="none" stroke="#9091b5" strokeWidth="2.500" />
          </svg>
        </SearchBox>
        {taskIcons.map((t) => (
          <AppButton key={t.name} aria-label={t.name} $open={t.open} $active={t.active}>
            {t.active ? (
              <ChromeIcon />
            ) : (
              <svg width="26" height="26" viewBox="0 0 26 26">
                {t.art}
              </svg>
            )}
          </AppButton>
        ))}
        <Spacer />
        <Weather>
          <svg width="26" height="30" viewBox="0 0 26 30">
            <path d="M17 8c4 8-5 16-16 11 3 9 20 12 22 1 1-5-2-10-6-12z" fill="#f5a32c" />
            <circle cx="18" cy="9" r="8" fill="#f59aa5" />
            <text x="18" y="13" textAnchor="middle" fontSize="12" fill="#222">
              1
            </text>
          </svg>
          <span>
            <span>0°C</span>
            <span>晴朗</span>
          </span>
        </Weather>
        <Tray>
          <TrayButton $w={32} aria-label="Show hidden icons">
            <Line size={14} d="M2 11l6-6 6 6" />
          </TrayButton>
          <TrayButton $w={32} aria-label="Cloud">
            <svg width="17" height="12" viewBox="0 0 17 12">
              <path d="M3 10C-1 8 1 4 4 4c2-5 8-4 9 0 3 0 4 2 4 4s-2 4-4 4H4z" fill="#bdbdbd" />
              <path d="M3 11.500C1 9 4 7 6 8c2-3 6-3 7-1 3-.5 4 1 4 2.500S15 12 13 12z" fill="#fff" />
            </svg>
          </TrayButton>
          <TrayButton $w={32} aria-label="Microphone">
            <Line w={1.4} color="#7cc4e8" d="M8 .8q2.500 0 2.500 2.500v4q0 2.500-2.500 2.500T5.500 7.300v-4Q5.500.8 8 .8zM3 7q0 5 5 5t5-5M8 12v4" />
          </TrayButton>
          <TrayButton $w={32}>英</TrayButton>
          <TrayButton $w={32} aria-label="Network">
            <Line w={1.3} d="M.5 6q7.500-6.500 15 0M3 8.700q5-4.500 10 0M5.500 11.400q2.500-2.300 5 0M7.800 13.800h.5" />
          </TrayButton>
          <TrayButton $w={20} aria-label="Volume">
            <Line w={1.1} d="M.8 5.500h2.500L7.500 2v12L3.300 10.500H.8zM10.500 5.500l5 5M15.500 5.500l-5 5" />
          </TrayButton>
          <TrayButton $w={28} aria-label="Battery">
            <svg width="18" height="16" viewBox="0 0 18 16">
              <path d="M2 3h12.500v9H2z" fill="none" stroke="#fff" strokeWidth="1.500" />
              <path d="M16 6h2v3h-2zM8 5h5v5H8z" fill="#fff" />
              <path d="M5.500 4.500l5.500 11H0z" fill="#fff" stroke="#222" strokeWidth=".6" />
              <path d="M5.500 8.500v3.500M5.500 13v1.300" stroke="#222" strokeWidth="1.300" />
            </svg>
          </TrayButton>
          <Clock>
            12:14 AM
            <br />
            4/17/2025
          </Clock>
          <svg width="15" height="17" viewBox="0 0 15 17">
            <path d="M1 13l1.500-2V6q0-4 4.500-4 2 0 3 1v4h2.500v4l1.500 2z" fill="#fff" />
            <path d="M5 15h4" stroke="#fff" strokeWidth="2" />
            <path d="M5 6h3.500L5 10h3.500" fill="none" stroke="#222" />
            <path d="M11 1h3.500L11 5h3.500" fill="none" stroke="#fff" strokeWidth="1.200" />
          </svg>
        </Tray>
      </Taskbar>

      <Cursor width="18" height="25" viewBox="0 0 18 25">
        <path
          d="M5 2.500q0-1.500 1.400-1.500T8 2.500V9q2-.8 2.800.7 1.700-.7 2.500.8 2.700-.5 2.700 1.500v5q0 6-5.500 6.500-4.500 0-6-3.500L1 14.500q-.5-2 1.500-2L5 15z"
          fill="#fff"
          stroke="#000"
          strokeWidth="1.200"
        />
        <path d="M8 9v4M10.800 10v3M13.400 11v2.500" stroke="#000" />
      </Cursor>
      <Watermark aria-hidden="true">
        {Array.from({ length: 9 }, (_, i) => (
          <Mark key={i}>WeChat:Wonderful_U_010224</Mark>
        ))}
      </Watermark>
    </Screen>
  );
}
